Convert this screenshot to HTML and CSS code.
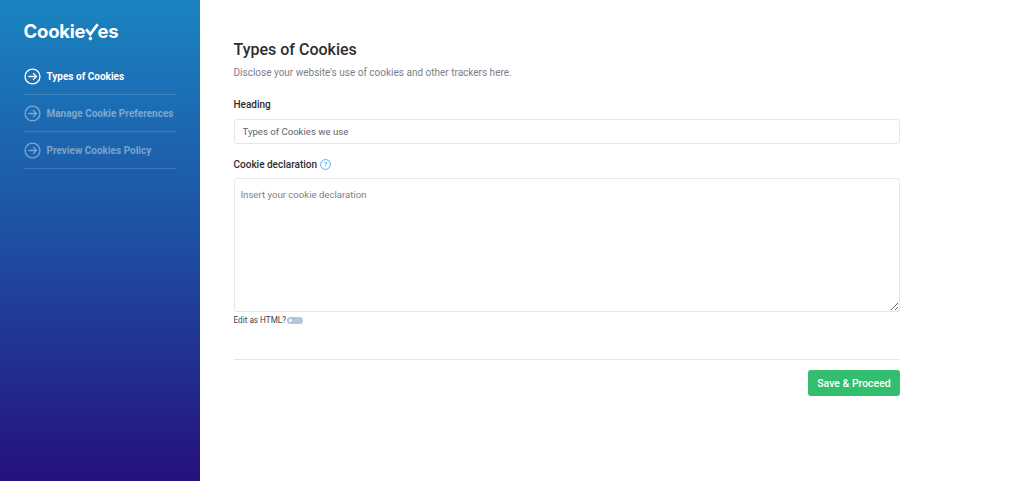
FILE: index.html
```html
<!DOCTYPE html>
<html lang="en">
<head>
<meta charset="utf-8">
<title>Types of Cookies</title>
<link rel="stylesheet" href="styles.css">
</head>
<body>
<div class="app">
  <aside class="sidebar">
    <div class="logo">
      <span>Cookie</span>
      <svg class="logo-y" width="14" height="18" viewBox="0 0 14 18" aria-hidden="true"><path d="M1.2 6.2 L5.2 11.4 L12.6 1.2" fill="none" stroke="#fff" stroke-width="2.7"/><circle cx="5.4" cy="15.6" r="1.8" fill="#fff"/></svg>
      <span>es</span>
    </div>
    <nav class="steps">
      <a class="step active"><svg class="step-icon" viewBox="0 0 18 18" aria-hidden="true"><circle cx="9" cy="9" r="7.9"/><path d="M4.6 9H13M9.6 5.4 13.2 9 9.6 12.6"/></svg><span>Types of Cookies</span></a>
      <a class="step"><svg class="step-icon" viewBox="0 0 18 18" aria-hidden="true"><circle cx="9" cy="9" r="7.9"/><path d="M4.6 9H13M9.6 5.4 13.2 9 9.6 12.6"/></svg><span>Manage Cookie Preferences</span></a>
      <a class="step"><svg class="step-icon" viewBox="0 0 18 18" aria-hidden="true"><circle cx="9" cy="9" r="7.9"/><path d="M4.6 9H13M9.6 5.4 13.2 9 9.6 12.6"/></svg><span>Preview Cookies Policy</span></a>
    </nav>
  </aside>
  <main class="main">
    <h1 class="title">Types of Cookies</h1>
    <p class="subtitle">Disclose your website's use of cookies and other trackers here.</p>
    <label class="label label-heading">Heading</label>
    <input class="input" type="text" value="Types of Cookies we use">
    <div class="label label-decl">Cookie declaration
      <svg class="help" width="11" height="11" viewBox="0 0 11 11" aria-hidden="true"><circle cx="5.5" cy="5.5" r="4.9"/><text x="5.5" y="8.2" text-anchor="middle">?</text></svg>
    </div>
    <textarea class="textarea" placeholder="Insert your cookie declaration"></textarea>
    <div class="html-row"><span>Edit as HTML?</span><span class="toggle"><span class="knob"></span></span></div>
    <div class="footer"><button class="save" type="button">Save &amp; Proceed</button></div>
  </main>
</div>
</body>
</html>
```
FILE: styles.css
```css
* { box-sizing: border-box; }
html, body { margin: 0; height: 100%; overflow: hidden; }
body { font-family: Roboto, "Liberation Sans", sans-serif; background: #fff; color: #27282c; }
.app { display: flex; height: 481px; }
.sidebar {
  width: 200px; flex: none; padding: 21px 24px 0 23.5px;
  background: linear-gradient(180deg, #1a84c0 0%, #1e4fa2 50%, #25107f 100%);
}
.logo {
  display: flex; align-items: flex-end; height: 21px; color: #fff;
  font-family: Inter, "Liberation Sans", sans-serif; font-weight: 700; font-size: 18.5px; line-height: 21px; letter-spacing: -0.2px;
}
.logo-y { flex: none; margin: 0 -2px 1px 0; }
.steps { margin-top: 16px; display: flex; flex-direction: column; }
.step {
  display: flex; align-items: center; gap: 6px; height: 37px;
  border-bottom: 1px solid rgba(255,255,255,.16);
  font-size: 10px; font-weight: 700; color: rgba(255,255,255,.42); white-space: nowrap;
}
.step.active { color: #fff; }
.step-icon { width: 17px; height: 17px; flex: none; fill: none; stroke: currentColor; stroke-width: 1.4; }
.main { flex: none; width: 666.5px; margin-left: 33.5px; padding-top: 40px; }
.title { margin: 0; font-size: 16px; line-height: 19px; font-weight: 500; color: #2d2e32; }
.subtitle { margin: 7px 0 0; font-size: 10px; line-height: 13px; color: #7b808a; }
.label { font-size: 10px; line-height: 13px; font-weight: 500; color: #2d2e32; display: block; }
.label-heading { margin-top: 19px; }
.input {
  display: block; width: 100%; height: 25px; margin-top: 8px; padding: 0 8px;
  border: 1px solid #e4e6ea; border-radius: 3px; outline: none;
  font: 400 9.6px Roboto, sans-serif; color: #5f636b; background: #fff;
}
.label-decl { margin-top: 14px; display: flex; align-items: center; gap: 3px; }
.help { fill: none; stroke: #3c93d6; stroke-width: .8; flex: none; }
.help text { font: 400 8px Roboto, sans-serif; fill: #3c93d6; stroke: none; }
.textarea {
  display: block; width: 100%; height: 134px; margin-top: 7px; padding: 10px 6px;
  border: 1px solid #e4e6ea; border-radius: 3px; outline: none;
  font: 400 9.6px Roboto, sans-serif; color: #5f636b; background: #fff;
}
.textarea::placeholder { color: #7d7f85; opacity: 1; }
.html-row { display: flex; align-items: center; gap: 1px; margin-top: 2px; height: 12px; font-size: 8.2px; color: #3f4247; }
.toggle { display: flex; align-items: center; width: 16px; height: 7px; padding: 0 2px; border-radius: 4px; background: #b6c6d9; }
.knob { width: 3px; height: 3px; border-radius: 50%; background: #fff; }
.footer { margin-top: 33px; padding-top: 10px; border-top: 1px solid #e4e6e9; display: flex; justify-content: flex-end; }
.save {
  width: 92px; height: 26px; padding: 0; border: 0; border-radius: 3px; background: #33bd6e; color: #fff;
  font: 500 10.5px Roboto, sans-serif;
}
```
